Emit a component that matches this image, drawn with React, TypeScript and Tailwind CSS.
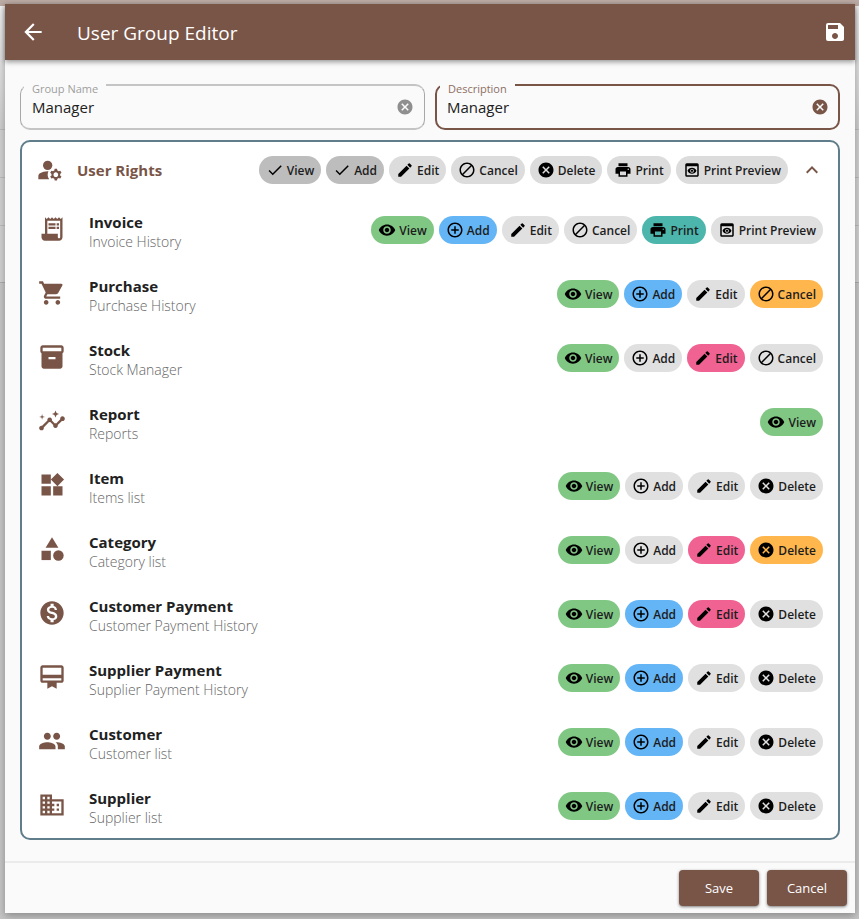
import type { ReactNode } from "react";
import type { IconType } from "react-icons";
import {
  MdAddCircleOutline,
  MdArrowBack,
  MdBlock,
  MdBusiness,
  MdCancel,
  MdCardMembership,
  MdCategory,
  MdCheck,
  MdEdit,
  MdInsights,
  MdInventory2,
  MdKeyboardArrowUp,
  MdManageAccounts,
  MdMonetizationOn,
  MdPeople,
  MdPreview,
  MdPrint,
  MdReceiptLong,
  MdSave,
  MdShoppingCart,
  MdVisibility,
  MdWidgets,
} from "react-icons/md";

type Action = "View" | "Add" | "Edit" | "Cancel" | "Delete" | "Print" | "Print Preview";

const actions: Record<Action, { icon: IconType; on: string }> = {
  View: { icon: MdVisibility, on: "bg-[#81c784]" },
  Add: { icon: MdAddCircleOutline, on: "bg-[#64b5f6]" },
  Edit: { icon: MdEdit, on: "bg-[#f06292]" },
  Cancel: { icon: MdBlock, on: "bg-[#ffb74d]" },
  Delete: { icon: MdCancel, on: "bg-[#ffb74d]" },
  Print: { icon: MdPrint, on: "bg-[#4db6ac]" },
  "Print Preview": { icon: MdPreview, on: "bg-[#e0e0e0]" },
};

type Right = { icon: IconType; title: string; note: string; actions: Action[]; granted: Action[] };

const full: Action[] = ["View", "Add", "Edit", "Delete"];

const rights: Right[] = [
  {
    icon: MdReceiptLong,
    title: "Invoice",
    note: "Invoice History",
    actions: ["View", "Add", "Edit", "Cancel", "Print", "Print Preview"],
    granted: ["View", "Add", "Print"],
  },
  {
    icon: MdShoppingCart,
    title: "Purchase",
    note: "Purchase History",
    actions: ["View", "Add", "Edit", "Cancel"],
    granted: ["View", "Add", "Cancel"],
  },
  {
    icon: MdInventory2,
    title: "Stock",
    note: "Stock Manager",
    actions: ["View", "Add", "Edit", "Cancel"],
    granted: ["View", "Edit"],
  },
  { icon: MdInsights, title: "Report", note: "Reports", actions: ["View"], granted: ["View"] },
  { icon: MdWidgets, title: "Item", note: "Items list", actions: full, granted: ["View"] },
  { icon: MdCategory, title: "Category", note: "Category list", actions: full, granted: ["View", "Edit", "Delete"] },
  {
    icon: MdMonetizationOn,
    title: "Customer Payment",
    note: "Customer Payment History",
    actions: full,
    granted: ["View", "Add", "Edit"],
  },
  {
    icon: MdCardMembership,
    title: "Supplier Payment",
    note: "Supplier Payment History",
    actions: full,
    granted: ["View", "Add"],
  },
  { icon: MdPeople, title: "Customer", note: "Customer list", actions: full, granted: ["View", "Add"] },
  { icon: MdBusiness, title: "Supplier", note: "Supplier list", actions: full, granted: ["View", "Add"] },
];

const headerActions: Action[] = ["View", "Add", "Edit", "Cancel", "Delete", "Print", "Print Preview"];

function Chip({ icon: Icon, tone, pressed, children }: { icon: IconType; tone: string; pressed: boolean; children: ReactNode }) {
  return (
    <button
      type="button"
      aria-pressed={pressed}
      className={`flex h-7 items-center gap-[3px] rounded-full px-[7px] text-[12px] leading-4 font-semibold whitespace-nowrap text-[#1c1c1c] ${tone}`}
    >
      <Icon className="size-[18px] shrink-0 text-black" />
      <span className="pt-px">{children}</span>
    </button>
  );
}

function Field({ id, label, value, active }: { id: string; label: string; value: string; active?: boolean }) {
  return (
    <div
      className={`relative flex h-[46px] flex-1 items-center rounded-[10px] ${
        active
          ? "border-2 border-[#795548] pr-[9px] pl-[10px]"
          : "border-x border-y-2 border-[#c4c4c4] border-x-[#a8a8a8] pr-[10px] pl-[11px]"
      }`}
    >
      <label
        htmlFor={id}
        className={`absolute -top-[5px] left-[3px] bg-[#fafafa] px-2 text-[11px] leading-4 ${
          active ? "text-[#8d6e63]" : "text-[#9e9e9e]"
        }`}
      >
        {label}
      </label>
      <input
        id={id}
        defaultValue={value}
        className="min-w-0 flex-1 bg-transparent text-[15px] leading-5 text-[#212121] outline-none"
      />
      <button type="button" aria-label={`Clear ${label}`} className={active ? "text-[#795548]" : "text-[#8f8f8f]"}>
        <MdCancel className="size-[18px]" />
      </button>
    </div>
  );
}

function Backdrop() {
  return (
    <div aria-hidden="true" className="absolute inset-0 flex flex-col bg-[#c6c6c6]">
      <div className="h-[6px] bg-[#bcaaa4]" />
      <div className="h-[124px] border-b border-[#bdbdbd] bg-linear-to-b from-[#f2f2f2] to-[#cfcfcf]" />
      <div className="h-12 border-b border-[#bdbdbd] bg-[#d2d2d2]" />
      <div className="h-12 border-b border-[#bdbdbd] bg-[#d2d2d2]" />
      <div className="h-[57px] border-b border-[#adadad] bg-[#d2d2d2]" />
    </div>
  );
}

export default function App() {
  return (
    <div className="relative min-h-screen px-[5px] pt-1 pb-[6px] font-['Open_Sans','Noto_Sans',sans-serif]">
      <Backdrop />
      <main className="relative mr-[-1px] flex min-h-[909px] flex-col bg-[#fafafa] shadow-[0_3px_8px_rgba(0,0,0,0.3)]">
        <header className="flex h-14 items-center bg-[#795548] pr-2 pl-[15px] text-white shadow-[0_2px_5px_rgba(0,0,0,0.4)]">
          <button type="button" aria-label="Back">
            <MdArrowBack className="size-[26px]" />
          </button>
          <h1 className="ml-[31px] flex-1 pt-0.5 text-[19px]">User Group Editor</h1>
          <button type="button" aria-label="Save">
            <MdSave className="size-6" />
          </button>
        </header>

        <div className="flex flex-1 flex-col px-[15px] pt-6">
          <div className="flex gap-[10px]">
            <Field id="group" label="Group Name" value="Manager" />
            <Field id="description" label="Description" value="Manager" active />
          </div>

          <section className="mt-[10px] rounded-[10px] border-2 border-[#607d8b] bg-white">
            <div className="flex h-14 items-center pr-[14px] pl-[14px]">
              <MdManageAccounts className="size-7 text-[#795548]" />
              <h2 className="ml-[13px] flex-1 text-[15px] font-bold text-[#795548]">User Rights</h2>
              <div className="flex gap-[5px]">
                {headerActions.map((name) => {
                  const checked = name === "View" || name === "Add";
                  return (
                    <Chip
                      key={name}
                      icon={checked ? MdCheck : actions[name].icon}
                      tone={checked ? "bg-[#bdbdbd]" : "bg-[#dcdcdc]"}
                      pressed={checked}
                    >
                      {name}
                    </Chip>
                  );
                })}
              </div>
              <button type="button" aria-label="Collapse" className="ml-3 text-[#795548]">
                <MdKeyboardArrowUp className="size-6" />
              </button>
            </div>

            <ul>
              {rights.map(({ icon: Icon, title, note, actions: available, granted }) => (
                <li key={title} className="flex h-16 items-center pr-[15px] pl-4">
                  <Icon className="mb-0.5 size-7 text-[#795548]" />
                  <div className="ml-[23px] flex-1 pt-1">
                    <h3 className="text-[15px] leading-5 font-bold text-[#212121]">{title}</h3>
                    <p className="text-[14px] leading-5 font-light text-[#666]">{note}</p>
                  </div>
                  <div className="flex gap-[5px]">
                    {available.map((name) => {
                      const on = granted.includes(name);
                      return (
                        <Chip
                          key={name}
                          icon={actions[name].icon}
                          tone={on ? actions[name].on : "bg-[#e0e0e0]"}
                          pressed={on}
                        >
                          {name}
                        </Chip>
                      );
                    })}
                  </div>
                </li>
              ))}
            </ul>
          </section>
        </div>

        <footer className="flex justify-end gap-2 border-t-2 border-[#ebebeb] px-2 py-[7px]">
          {["Save", "Cancel"].map((name) => (
            <button
              key={name}
              type="button"
              className="h-9 w-20 rounded bg-[#795548] pt-0.5 text-[13px] text-white shadow-[0_1px_3px_rgba(0,0,0,0.5)]"
            >
              {name}
            </button>
          ))}
        </footer>
      </main>
    </div>
  );
}
